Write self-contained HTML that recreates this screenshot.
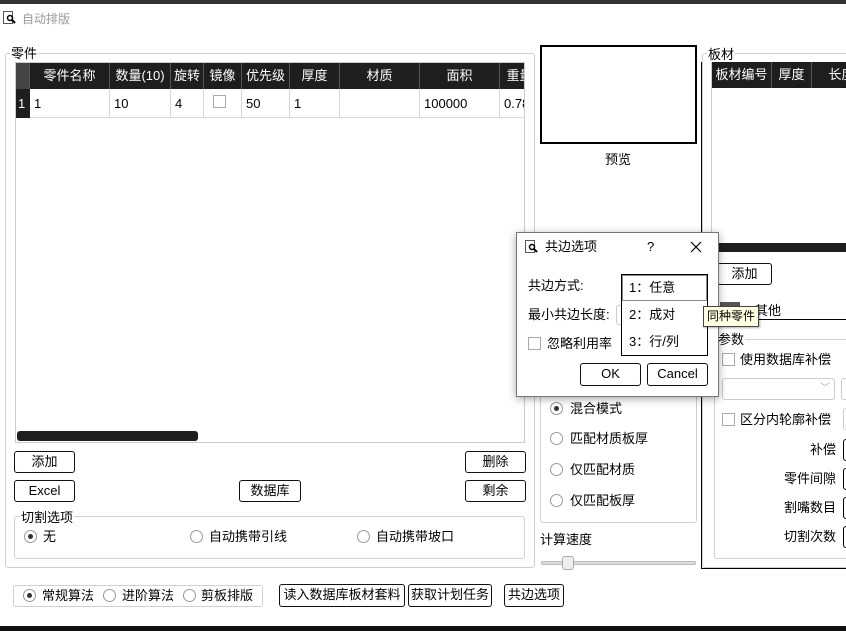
<!DOCTYPE html>
<html><head><meta charset="utf-8"><style>
*{box-sizing:border-box;margin:0;padding:0}
body{width:846px;height:631px;overflow:hidden;background:#fff;position:relative;font-family:"Liberation Sans","Noto Sans CJK SC",sans-serif;font-size:13px;color:#000}
.a{position:absolute}
.grp{position:absolute;border:1px solid #d0d0d0;border-radius:3px}
.lbl{position:absolute;background:#fff;padding:0 1px;line-height:14px}
.btn{position:absolute;border:1px solid #111;border-radius:3px;background:#fff;text-align:center;font-size:13px;line-height:20px}
.th{position:absolute;top:0;height:26px;background:#1e1e1e;color:#fff;text-align:center;line-height:26px;border-right:1px solid #555;font-size:13px}
.td{position:absolute;top:26px;height:29px;border-right:1px solid #d8d8d8;border-bottom:1px solid #d8d8d8;line-height:29px;padding-left:4px}
.rad{position:absolute;width:13px;height:13px;border:1px solid #999;border-radius:50%;background:#fff}
.rad.on::after{content:"";position:absolute;left:3px;top:3px;width:5px;height:5px;border-radius:50%;background:#333}
.chk{position:absolute;width:13px;height:13px;border:1px solid #aaa;background:#fff}
.t{position:absolute;white-space:nowrap;line-height:16px}
</style></head><body>
<div class="a" style="left:0;top:0;width:846px;height:4px;background:#333"></div>
<svg class="a" style="left:3px;top:11px" width="14" height="14"><rect x="0.5" y="0.5" width="9" height="12" fill="#fff" stroke="#555"/><circle cx="7" cy="7" r="2.5" fill="none" stroke="#000" stroke-width="1.5"/><line x1="9" y1="9" x2="12" y2="12" stroke="#000" stroke-width="2"/></svg>
<div class="t" style="left:22px;top:11px;color:#999;font-size:12px">自动排版</div>

<!-- 零件 group -->
<div class="grp" style="left:5px;top:53px;width:530px;height:515px"></div>
<div class="lbl" style="left:10px;top:47px;font-size:13px">零件</div>
<div class="a" style="left:15px;top:62px;width:510px;height:381px;border:1px solid #ccc;overflow:hidden;background:#fff">
 <div class="th" style="left:0;width:14px;background:#444"></div>
 <div class="th" style="left:14px;width:80px">零件名称</div>
 <div class="th" style="left:94px;width:61px">数量(10)</div>
 <div class="th" style="left:155px;width:33px">旋转</div>
 <div class="th" style="left:188px;width:38px">镜像</div>
 <div class="th" style="left:226px;width:48px">优先级</div>
 <div class="th" style="left:274px;width:50px">厚度</div>
 <div class="th" style="left:324px;width:80px">材质</div>
 <div class="th" style="left:404px;width:80px">面积</div>
 <div class="th" style="left:484px;width:40px">重量</div>
 <div class="a" style="left:0;top:26px;width:14px;height:29px;background:#1e1e1e;color:#fff;line-height:29px;padding-left:2px">1</div>
 <div class="td" style="left:14px;width:80px">1</div>
 <div class="td" style="left:94px;width:61px">10</div>
 <div class="td" style="left:155px;width:33px">4</div>
 <div class="td" style="left:188px;width:38px"><div class="chk" style="left:9px;top:6px"></div></div>
 <div class="td" style="left:226px;width:48px">50</div>
 <div class="td" style="left:274px;width:50px">1</div>
 <div class="td" style="left:324px;width:80px"></div>
 <div class="td" style="left:404px;width:80px">100000</div>
 <div class="td" style="left:484px;width:40px">0.785</div>
 <div class="a" style="left:1px;top:368px;width:181px;height:10px;background:#1e1e1e;border-radius:3px"></div>
</div>
<div class="btn" style="left:14px;top:451px;width:61px;height:22px">添加</div>
<div class="btn" style="left:465px;top:451px;width:61px;height:22px">删除</div>
<div class="btn" style="left:14px;top:480px;width:61px;height:22px">Excel</div>
<div class="btn" style="left:239px;top:480px;width:62px;height:22px">数据库</div>
<div class="btn" style="left:465px;top:480px;width:61px;height:22px">剩余</div>
<div class="grp" style="left:14px;top:516px;width:511px;height:43px"></div>
<div class="lbl" style="left:20px;top:511px">切割选项</div>
<div class="rad on" style="left:24px;top:530px"></div><div class="t" style="left:43px;top:529px">无</div>
<div class="rad" style="left:190px;top:530px"></div><div class="t" style="left:209px;top:529px">自动携带引线</div>
<div class="rad" style="left:357px;top:530px"></div><div class="t" style="left:376px;top:529px">自动携带坡口</div>

<!-- middle -->
<div class="a" style="left:540px;top:45px;width:157px;height:99px;border:2px solid #000"></div>
<div class="t" style="left:605px;top:152px">预览</div>
<div class="grp" style="left:540px;top:370px;width:157px;height:153px"></div>
<div class="rad on" style="left:550px;top:402px"></div><div class="t" style="left:570px;top:401px">混合模式</div>
<div class="rad" style="left:550px;top:432px"></div><div class="t" style="left:570px;top:431px">匹配材质板厚</div>
<div class="rad" style="left:550px;top:463px"></div><div class="t" style="left:570px;top:462px">仅匹配材质</div>
<div class="rad" style="left:550px;top:494px"></div><div class="t" style="left:570px;top:493px">仅匹配板厚</div>
<div class="t" style="left:540px;top:532px">计算速度</div>
<div class="a" style="left:541px;top:561px;width:155px;height:4px;background:#ddd;border:1px solid #bbb;border-radius:2px"></div>
<div class="a" style="left:562px;top:556px;width:12px;height:14px;background:#eee;border:1px solid #aaa;border-radius:3px"></div>

<!-- 板材 -->
<div class="a" style="left:701px;top:62px;width:145px;height:507px;border-left:1px solid #000;border-bottom:1px solid #000"></div>
<div class="grp" style="left:702px;top:53px;width:150px;height:515px"></div>
<div class="lbl" style="left:707px;top:48px">板材</div>
<div class="a" style="left:711px;top:62px;width:135px;height:190px;border-left:1px solid #ccc;background:#fff;overflow:hidden">
 <div class="th" style="left:0;width:60px">板材编号</div>
 <div class="th" style="left:60px;width:40px">厚度</div>
 <div class="th" style="left:100px;width:60px">长度</div>
 <div class="a" style="left:0;top:181px;width:135px;height:9px;background:#1e1e1e"></div>
</div>
<div class="btn" style="left:717px;top:263px;width:55px;height:22px">添加</div>
<div class="a" style="left:720px;top:302px;width:20px;height:10px;background:#555"></div>
<div class="t" style="left:755px;top:303px">其他</div>
<div class="a" style="left:718px;top:319px;width:128px;height:1px;background:#000"></div>
<div class="grp" style="left:714px;top:339px;width:140px;height:220px"></div>
<div class="lbl" style="left:717px;top:333px">参数</div>
<div class="chk" style="left:722px;top:353px"></div><div class="t" style="left:740px;top:352px">使用数据库补偿</div>
<div class="a" style="left:722px;top:378px;width:113px;height:22px;border:1px solid #ccc;border-radius:3px"></div>
<div class="t" style="left:820px;top:381px;color:#aaa;font-size:10px">﹀</div>
<div class="a" style="left:841px;top:378px;width:10px;height:22px;border:1px solid #ccc;border-radius:3px"></div>
<div class="chk" style="left:722px;top:413px"></div><div class="t" style="left:740px;top:412px">区分内轮廓补偿</div>
<div class="a" style="left:843px;top:408px;width:10px;height:22px;border:1px solid #ccc;border-radius:3px"></div>
<div class="t" style="left:810px;top:442px">补偿</div>
<div class="t" style="left:784px;top:471px">零件间隙</div>
<div class="t" style="left:784px;top:500px">割嘴数目</div>
<div class="t" style="left:784px;top:529px">切割次数</div>
<div class="a" style="left:843px;top:439px;width:10px;height:22px;border:1px solid #000;border-radius:3px"></div>
<div class="a" style="left:843px;top:468px;width:10px;height:22px;border:1px solid #000;border-radius:3px"></div>
<div class="a" style="left:843px;top:497px;width:10px;height:22px;border:1px solid #000;border-radius:3px"></div>
<div class="a" style="left:843px;top:526px;width:10px;height:22px;border:1px solid #000;border-radius:3px"></div>

<!-- bottom -->
<div class="grp" style="left:13px;top:585px;width:250px;height:22px"></div>
<div class="rad on" style="left:23px;top:589px"></div><div class="t" style="left:42px;top:588px">常规算法</div>
<div class="rad" style="left:103px;top:589px"></div><div class="t" style="left:122px;top:588px">进阶算法</div>
<div class="rad" style="left:183px;top:589px"></div><div class="t" style="left:201px;top:588px">剪板排版</div>
<div class="btn" style="left:279px;top:584px;width:126px;height:23px">读入数据库板材套料</div>
<div class="btn" style="left:408px;top:584px;width:84px;height:23px">获取计划任务</div>
<div class="btn" style="left:504px;top:584px;width:60px;height:23px">共边选项</div>
<div class="a" style="left:0;top:626px;width:846px;height:5px;background:#111"></div>

<!-- dialog -->
<div class="a" style="left:516px;top:232px;width:203px;height:165px;background:#fff;border:1px solid #777;box-shadow:0 2px 8px rgba(0,0,0,.35)"></div>
<svg class="a" style="left:525px;top:240px" width="14" height="14"><rect x="0.5" y="0.5" width="9" height="12" fill="#fff" stroke="#555"/><circle cx="7" cy="7" r="2.5" fill="none" stroke="#000" stroke-width="1.5"/><line x1="9" y1="9" x2="12" y2="12" stroke="#000" stroke-width="2"/></svg>
<div class="t" style="left:545px;top:239px">共边选项</div>
<div class="t" style="left:647px;top:239px">?</div>
<svg class="a" style="left:690px;top:241px" width="12" height="12"><path d="M1 1L11 11M11 1L1 11" stroke="#000" stroke-width="1.2"/></svg>
<div class="t" style="left:528px;top:278px">共边方式:</div>
<div class="t" style="left:528px;top:307px">最小共边长度:</div>
<div class="a" style="left:616px;top:305px;width:8px;height:20px;border:1px solid #ccc;border-radius:3px"></div>
<div class="chk" style="left:528px;top:337px"></div><div class="t" style="left:547px;top:336px">忽略利用率</div>
<div class="btn" style="left:580px;top:363px;width:61px;height:23px">OK</div>
<div class="btn" style="left:647px;top:363px;width:61px;height:23px">Cancel</div>
<div class="a" style="left:621px;top:274px;width:87px;height:82px;background:#fff;border:1px solid #000"></div>
<div class="a" style="left:622px;top:275px;width:85px;height:26px;border:1px solid #888"></div>
<div class="t" style="left:629px;top:280px">1：任意</div>
<div class="t" style="left:629px;top:307px">2：成对</div>
<div class="t" style="left:629px;top:334px">3：行/列</div>
<div class="a" style="left:703px;top:306px;width:56px;height:21px;background:#ffffe1;border:1px solid #444;box-shadow:1px 1px 2px rgba(0,0,0,.3)"></div>
<div class="t" style="left:707px;top:308px;font-size:12px">同种零件</div>
</body></html>
